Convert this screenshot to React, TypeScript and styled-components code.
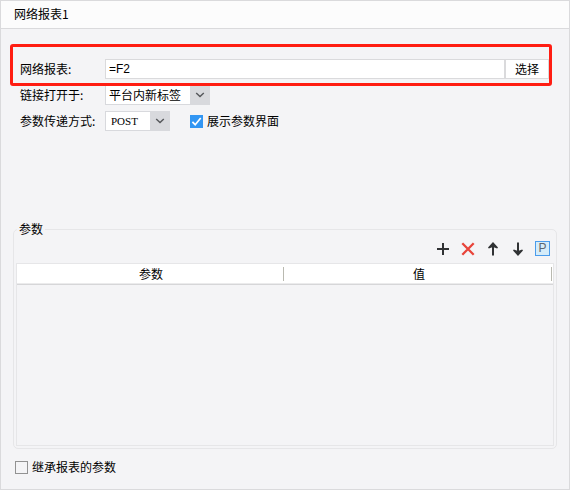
import React, { useState } from "react";
import styled, { createGlobalStyle } from "styled-components";

const GlobalStyle = createGlobalStyle`
  * { box-sizing: border-box; }
  body { margin: 0; }
  body, button, input, select {
    font-family: "Noto Sans CJK SC", sans-serif;
    font-size: 12px;
    line-height: 18px;
    color: #000;
  }
`;

const Panel = styled.main`
  display: flex;
  flex-direction: column;
  min-height: 100vh;
  background: #f4f4f6;
  border: 1px solid #dadadc;
`;

const Title = styled.h1`
  margin: 0;
  padding: 4px 13px 5px;
  font-size: 12px;
  font-weight: 400;
  line-height: 18px;
  background: #fcfcfc;
  border-bottom: 1px solid #dadadc;
`;

const Form = styled.form`
  display: flex;
  flex: 1;
  flex-direction: column;
`;

const Settings = styled.div`
  display: flex;
  flex-direction: column;
  gap: 6px;
  padding: 30px 20px 0 19px;
`;

const Row = styled.div<{ $highlighted?: boolean }>`
  position: relative;
  display: grid;
  grid-template-columns: 85px 1fr;
  align-items: center;
  height: 20px;

  &::after {
    content: "";
    display: ${(p) => (p.$highlighted ? "block" : "none")};
    position: absolute;
    z-index: 1;
    inset: -15px -3px -7px -10px;
    border: 3px solid #ff1d12;
    border-radius: 3px;
    pointer-events: none;
  }
`;

const Controls = styled.div<{ $gap: number }>`
  display: flex;
  align-items: center;
  gap: ${(p) => p.$gap}px;
`;

const TextField = styled.input`
  flex: 1;
  min-width: 0;
  height: 20px;
  padding: 0 3px;
  font-family: "Liberation Sans", sans-serif;
  font-size: 12px;
  background: #fff;
  border: 1px solid #dadadc;
  border-radius: 0;
  outline: none;
`;

const ChooseButton = styled.button`
  width: 44px;
  height: 20px;
  padding: 0;
  background: #fff;
  border: 1px solid #dadadc;
`;

const SelectBox = styled.div<{ $width: number }>`
  display: grid;
  grid-template-columns: 1fr 20px;
  width: ${(p) => p.$width}px;
  height: 20px;
  background: linear-gradient(#d8d9dd, #d8d9dd) right / 20px 100% no-repeat #fff;

  > svg {
    grid-area: 1 / 2;
    place-self: center;
    pointer-events: none;
  }
`;

const Select = styled.select<{ $latin?: boolean }>`
  grid-area: 1 / 1 / 2 / 3;
  appearance: none;
  height: 20px;
  padding: 0 20px 0 ${(p) => (p.$latin ? 5 : 3)}px;
  font-family: ${(p) => (p.$latin ? '"Liberation Serif", serif' : '"Noto Sans CJK SC", sans-serif')};
  font-size: ${(p) => (p.$latin ? 11 : 12)}px;
  background: transparent;
  border: 1px solid #d8d9dd;
  border-radius: 0;
  outline: none;
`;

const CheckLabel = styled.label`
  display: flex;
  align-items: center;
  gap: 4px;
`;

const CheckMark = styled.span`
  display: grid;
  width: 13px;
  height: 13px;

  > * { grid-area: 1 / 1; }
  > svg { display: none; pointer-events: none; }
  > input:checked + svg { display: block; }
`;

const CheckInput = styled.input`
  appearance: none;
  width: 13px;
  height: 13px;
  margin: 0;
  background: #f4f4f6;
  border: 1px solid #929292;

  &:checked {
    background: #3296f3;
    border-color: #3296f3;
  }
`;

const ParamGroup = styled.fieldset`
  flex: 1;
  min-width: 0;
  margin: 89px 12px 0;
  padding: 0 2px 2px;
  border: 1px solid #e6e6e8;
  border-radius: 5px;
`;

const Legend = styled.legend`
  margin-left: 1px;
  padding: 0 2px;
  line-height: 18px;
`;

const Toolbar = styled.div`
  display: flex;
  justify-content: flex-end;
  gap: 9px;
  padding: 3px 4px 6px;
`;

const ToolButton = styled.button`
  display: grid;
  place-items: center;
  width: 16px;
  height: 16px;
  padding: 0;
  background: none;
  border: 0;
`;

const TableFrame = styled.div`
  min-height: 183px;
  border: 1px solid #e6e6e8;
`;

const Table = styled.table`
  width: 100%;
  table-layout: fixed;
  border-collapse: collapse;
`;

const HeadRow = styled.tr`
  background: #fff;
`;

const HeadCell = styled.th`
  padding: 1px 0 2px;
  font-weight: 400;
  line-height: 18px;
  background:
    linear-gradient(#ebebec 50%, #d6d6d8 50%) bottom / 100% 2px no-repeat,
    linear-gradient(#b9b9b0, #b9b9b0) right 1px top 3px / 1px 14px no-repeat;
`;

const Footer = styled.div`
  padding: 9px 14px 13px;
`;

function Chevron() {
  return (
    <svg width="10" height="6" viewBox="0 0 10 6" fill="none" stroke="#55575b" strokeWidth="1.4" aria-hidden="true">
      <path d="M1.2 1 5 4.6 8.8 1" />
    </svg>
  );
}

function Checkbox({ text, initial = false }: { text: string; initial?: boolean }) {
  const [checked, setChecked] = useState(initial);
  return (
    <CheckLabel>
      <CheckMark>
        <CheckInput type="checkbox" checked={checked} onChange={(e) => setChecked(e.target.checked)} />
        <svg width="13" height="13" viewBox="0 0 13 13" fill="none" stroke="#fff" strokeWidth="1.7" aria-hidden="true">
          <path d="M2.4 6.8 5.2 9.7 10.7 3" />
        </svg>
      </CheckMark>
      {text}
    </CheckLabel>
  );
}

const tools = [
  {
    label: "添加",
    icon: <path d="M8 2v12M2 8h12" stroke="#303234" strokeWidth="2" />,
  },
  {
    label: "删除",
    icon: <path d="M2.3 2.3 13.7 13.7M13.7 2.3 2.3 13.7" stroke="#e8443a" strokeWidth="2.3" />,
  },
  {
    label: "上移",
    icon: (
      <>
        <path d="M8 14.5V5" stroke="#303234" strokeWidth="2" />
        <path d="M8 1 13 6.4 12.2 7.4 8 6 3.8 7.4 3 6.4Z" fill="#303234" />
      </>
    ),
  },
  {
    label: "下移",
    icon: (
      <>
        <path d="M8 1.5V11" stroke="#303234" strokeWidth="2" />
        <path d="M8 15 13 9.6 12.2 8.6 8 10 3.8 8.6 3 9.6Z" fill="#303234" />
      </>
    ),
  },
];

const ParamButton = styled(ToolButton)`
  width: 15px;
  height: 15px;
  font-family: "Liberation Sans", sans-serif;
  font-size: 12px;
  line-height: 13px;
  color: #5c6670;
  background: #d5ecf9;
  border: 1px solid #4a9cec;
`;

export default function App() {
  const [report, setReport] = useState("=F2");
  return (
    <>
      <GlobalStyle />
      <Panel>
        <Title>网络报表1</Title>
        <Form onSubmit={(e) => e.preventDefault()}>
          <Settings>
            <Row $highlighted>
              <label htmlFor="report">网络报表:</label>
              <Controls $gap={0}>
                <TextField id="report" value={report} onChange={(e) => setReport(e.target.value)} />
                <ChooseButton type="button">选择</ChooseButton>
              </Controls>
            </Row>
            <Row>
              <label htmlFor="target">链接打开于:</label>
              <SelectBox $width={105}>
                <Select id="target">
                  <option>平台内新标签</option>
                </Select>
                <Chevron />
              </SelectBox>
            </Row>
            <Row>
              <label htmlFor="method">参数传递方式:</label>
              <Controls $gap={20}>
                <SelectBox $width={65}>
                  <Select id="method" $latin>
                    <option>POST</option>
                    <option>GET</option>
                  </Select>
                  <Chevron />
                </SelectBox>
                <Checkbox text="展示参数界面" initial />
              </Controls>
            </Row>
          </Settings>
          <ParamGroup>
            <Legend>参数</Legend>
            <Toolbar>
              {tools.map((tool) => (
                <ToolButton key={tool.label} type="button" aria-label={tool.label}>
                  <svg width="16" height="16" viewBox="0 0 16 16" fill="none" aria-hidden="true">
                    {tool.icon}
                  </svg>
                </ToolButton>
              ))}
              <ParamButton type="button">P</ParamButton>
            </Toolbar>
            <TableFrame>
              <Table>
                <thead>
                  <HeadRow>
                    <HeadCell scope="col">参数</HeadCell>
                    <HeadCell scope="col">值</HeadCell>
                  </HeadRow>
                </thead>
              </Table>
            </TableFrame>
          </ParamGroup>
          <Footer>
            <Checkbox text="继承报表的参数" />
          </Footer>
        </Form>
      </Panel>
    </>
  );
}
